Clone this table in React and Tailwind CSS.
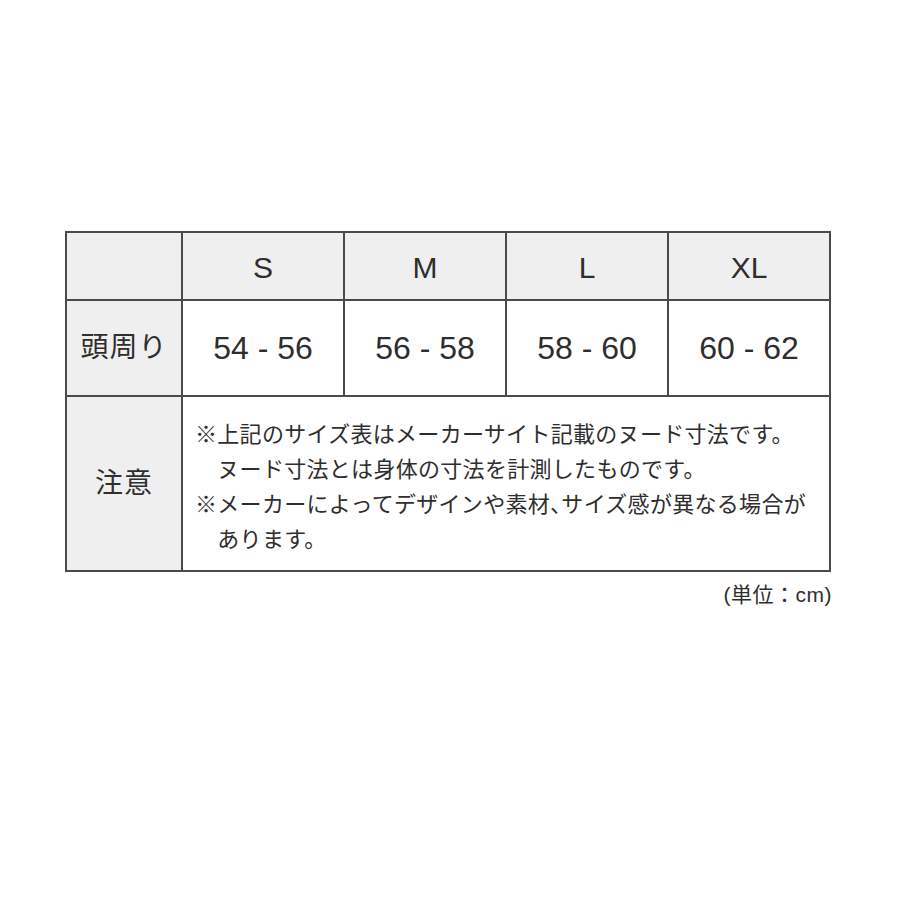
import React from "react";

const sizes = [
  { label: "S", range: "54 - 56" },
  { label: "M", range: "56 - 58" },
  { label: "L", range: "58 - 60" },
  { label: "XL", range: "60 - 62" },
];

const font = {
  fontFamily: '"Liberation Sans", "Noto Sans CJK JP", sans-serif',
};

export default function App() {
  return (
    <div className="w-[900px] h-[900px] bg-white text-[#2e2e2e]" style={font}>
      <div className="pt-[231px] pl-[65px]">
        <div className="w-[766px] grid grid-cols-[114px_160px_160px_160px_160px] grid-rows-[66px_94px_173px] gap-[2px] p-[2px] bg-[#4a4a4a]">
          {/* header row */}
          <div className="bg-[#efefef]" />
          {sizes.map((s) => (
            <div
              key={s.label}
              className="bg-[#efefef] flex items-center justify-center text-[30px] pt-[2px]"
            >
              {s.label}
            </div>
          ))}

          {/* head size */}
          <div className="bg-[#efefef] flex items-center justify-center text-[28px] tracking-[1px]">
            頭周り
          </div>
          {sizes.map((s) => (
            <div
              key={s.range}
              className="bg-white flex items-center justify-center text-[32px]"
            >
              {s.range}
            </div>
          ))}

          {/* notes */}
          <div className="bg-[#efefef] flex items-center justify-center text-[28px] tracking-[1px]">
            注意
          </div>
          <div className="col-span-4 bg-white pl-[12px] pt-[20px] text-[22px] leading-[35px] tracking-[0.3px]">
            <p>※上記のサイズ表はメーカーサイト記載のヌード寸法です。</p>
            <p>　ヌード寸法とは身体の寸法を計測したものです。</p>
            <p>
              ※メーカーによってデザインや素材<span className="[font-feature-settings:'halt']">、</span>サイズ感が異なる場合が
            </p>
            <p>　あります。</p>
          </div>
        </div>
        <div className="w-[767px] flex justify-end mt-[11px] text-[21px] leading-[24px] tracking-[0.5px]">
          <span>(単位：cm)</span>
        </div>
      </div>
    </div>
  );
}
